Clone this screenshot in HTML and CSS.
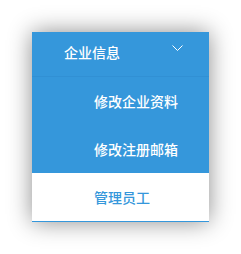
FILE: index.html
```html
<!DOCTYPE html>
<html lang="zh-CN">
<head>
    <meta charset="UTF-8">
    <meta name="viewport" content="width=device-width, initial-scale=1.0">
    <title>企业信息</title>
    <link rel="stylesheet" href="styles.css">
</head>
<body>
    <div class="menu">
        <div class="menu-title">
            <span>企业信息</span>
            <svg class="arrow" width="11" height="7" viewBox="0 0 11 7">
                <polyline points="0.5,0.5 5.5,5.5 10.5,0.5" fill="none" stroke="#fff" stroke-width="1"/>
            </svg>
        </div>
        <ul class="sub-menu">
            <li class="item">修改企业资料</li>
            <li class="item">修改注册邮箱</li>
            <li class="item active">管理员工</li>
        </ul>
    </div>
</body>
</html>
```

FILE: styles.css
```css
body {
    margin: 0;
    padding: 32px;
    background-color: #fff;
    font-family: "Noto Sans CJK SC", "Microsoft YaHei", sans-serif;
    font-size: 14px;
    font-weight: 500;
}
.menu {
    width: 177px;
    background-color: #3597db;
    box-shadow: 0 0 22px rgba(0, 0, 0, 0.45);
    border-bottom: 1px solid #3597db;
}
.menu-title {
    display: flex;
    justify-content: space-between;
    height: 44px;
    line-height: 40px;
    padding: 0 26px 0 32px;
    color: #fff;
    border-bottom: 1px solid #3190d4;
}
.arrow {
    margin-top: 13px;
}
.sub-menu {
    list-style: none;
    margin: 0;
    padding: 0;
}
.item {
    height: 48px;
    line-height: 48px;
    padding-left: 62px;
    color: #fff;
}
.item.active {
    background-color: #fff;
    color: #3597db;
}
```
